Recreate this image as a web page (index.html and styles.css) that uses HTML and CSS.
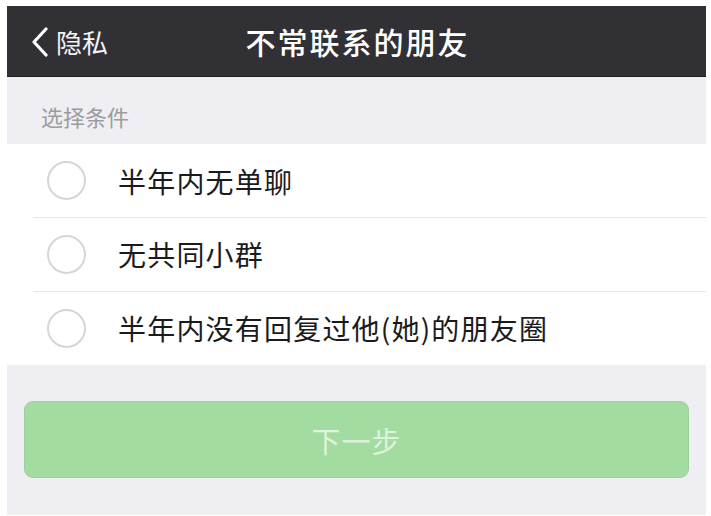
FILE: index.html
```html
<!DOCTYPE html>
<html lang="zh-CN">
<head>
<meta charset="utf-8">
<title>不常联系的朋友</title>
<link rel="stylesheet" href="styles.css">
</head>
<body>
<div class="screen">
  <header class="navbar">
    <div class="back">
      <svg class="chev" width="18" height="30" viewBox="0 0 18 30"><polyline points="15,2 3,15 15,28" fill="none" stroke="#ffffff" stroke-width="3.2" stroke-linecap="round" stroke-linejoin="round"/></svg>
      <span class="back-text">隐私</span>
    </div>
    <h1 class="title">不常联系的朋友</h1>
  </header>
  <div class="section-label">选择条件</div>
  <ul class="list">
    <li class="row"><span class="radio"></span><span class="row-text">半年内无单聊</span></li>
    <li class="row"><span class="radio"></span><span class="row-text">无共同小群</span></li>
    <li class="row"><span class="radio"></span><span class="row-text">半年内没有回复过他(她)的朋友圈</span></li>
  </ul>
  <div class="actions">
    <button class="next">下一步</button>
  </div>
</div>
</body>
</html>
```
FILE: styles.css
```css
* { box-sizing: border-box; }
html, body { margin: 0; padding: 0; background: #ffffff; }
body {
  font-family: "Noto Sans CJK SC", "Noto Sans", sans-serif;
  width: 711px;
  height: 516px;
  overflow: hidden;
}
.screen {
  margin: 6px 5px 0 7px;
  height: 509px;
  background: #efeef3;
  display: flex;
  flex-direction: column;
}
.navbar {
  height: 71px;
  background: #313035;
  border-bottom: 1px solid #1e1d21;
  display: flex;
  align-items: center;
  justify-content: center;
  position: relative;
  color: #ffffff;
}
.back {
  position: absolute;
  left: 24px;
  top: 0;
  bottom: 0;
  display: flex;
  align-items: center;
  gap: 7px;
}
.chev { display: block; margin-top: 1px; }
.back-text {
  font-size: 26px;
  letter-spacing: 0px;
  color: #f4f4f6;
}
.title {
  margin: 0 0 0 2px;
  font-size: 30px;
  font-weight: 500;
  letter-spacing: 2px;
  color: #ffffff;
}
.section-label {
  height: 67px;
  padding: 24px 0 0 34px;
  font-size: 22px;
  color: #9c9ba0;
  line-height: 30px;
}
.list {
  list-style: none;
  margin: 0;
  padding: 0;
  background: #ffffff;
}
.row {
  height: 74px;
  display: flex;
  align-items: center;
  padding-left: 40px;
  position: relative;
}
.row + .row::before {
  content: "";
  position: absolute;
  left: 26px;
  right: 0;
  top: 0;
  height: 1px;
  background: #e6e5ea;
}
.row:first-child { height: 73px; }
.radio {
  width: 39px;
  height: 39px;
  border: 2px solid #d6d6d9;
  border-radius: 50%;
  flex: none;
}
.row-text {
  margin-left: 32px;
  font-size: 28px;
  color: #1b1b1d;
  letter-spacing: 1.2px;
}
.actions {
  padding: 36px 17px 0 17px;
}
.next {
  width: 100%;
  height: 77px;
  border: 1px solid #9ccf99;
  border-radius: 9px;
  background: #a2dca1;
  color: #def3dc;
  font-family: "Noto Sans CJK SC", "Noto Sans", sans-serif;
  font-size: 29px;
  letter-spacing: 1px;
  cursor: default;
}
```
